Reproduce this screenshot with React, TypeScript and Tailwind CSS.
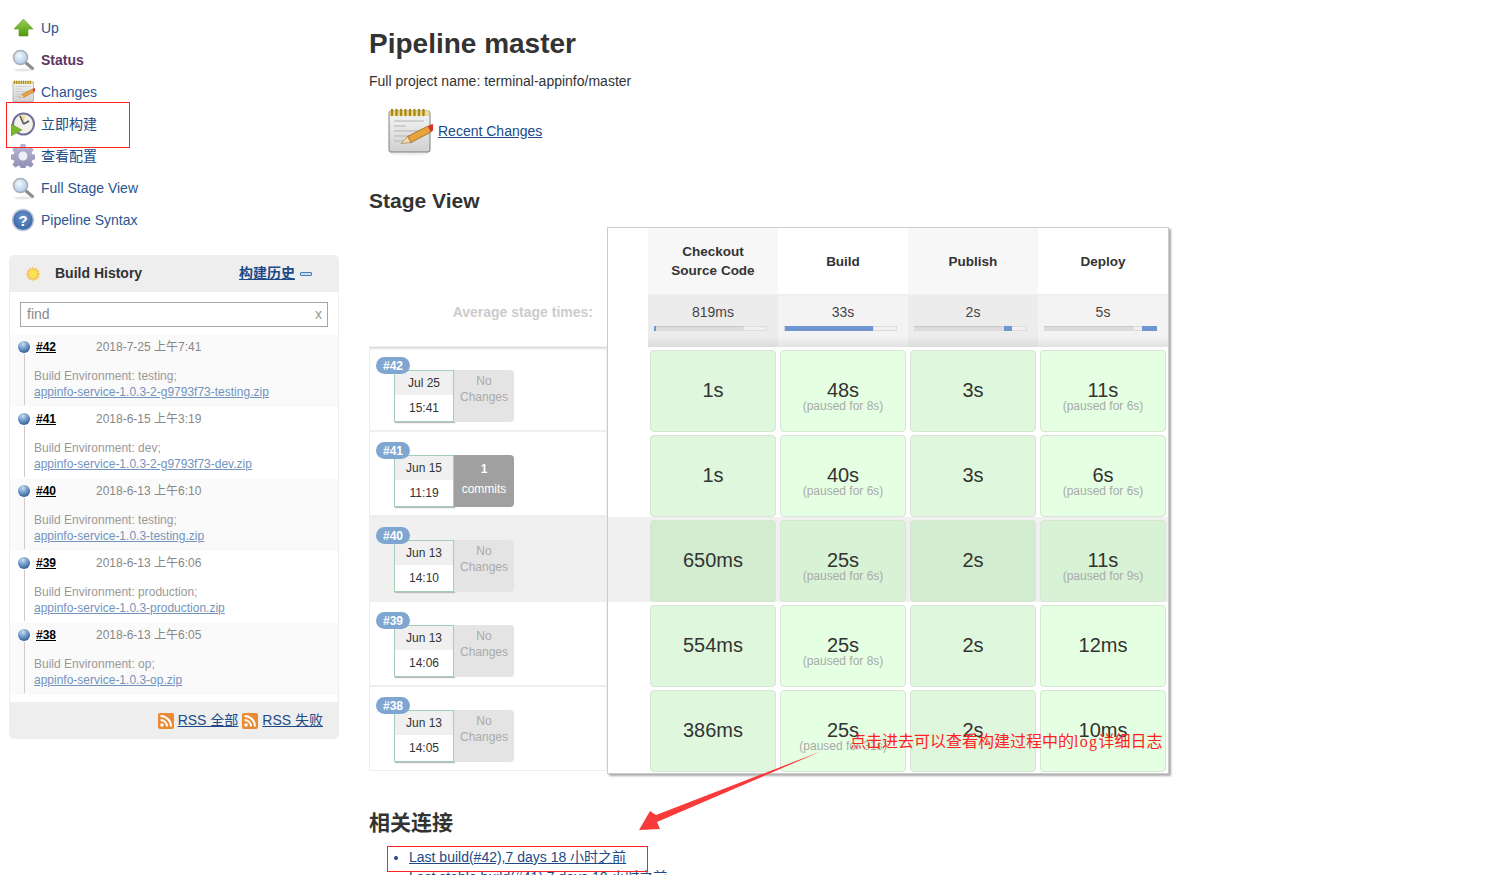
import { useId } from 'react';

// ---- icons ----
function UpIcon() {
  return (
    <svg width="24" height="24" viewBox="0 0 24 24" className="shrink-0">
      <defs>
        <linearGradient id="up" x1="0" y1="0" x2="0" y2="1">
          <stop offset="0" stopColor="#9ccf5a" />
          <stop offset="1" stopColor="#4e9a06" />
        </linearGradient>
      </defs>
      <path d="M12.5 3 L22 13 H17 V20 H8 V13 H3 Z" fill="url(#up)" stroke="#5a9a1c" strokeWidth="0.6" />
    </svg>
  );
}

function SearchIcon() {
  const id = useId();
  return (
    <svg width="24" height="24" viewBox="0 0 24 24" className="shrink-0">
      <defs>
        <radialGradient id={id} cx="0.4" cy="0.35" r="0.7">
          <stop offset="0" stopColor="#f2f8fd" />
          <stop offset="1" stopColor="#a9c8e6" />
        </radialGradient>
      </defs>
      <ellipse cx="12" cy="22" rx="9" ry="1.5" fill="#e6e6e6" />
      <path d="M14.5 14.5 L21.5 20.5" stroke="#8d8d8d" strokeWidth="3" strokeLinecap="round" />
      <circle cx="9.5" cy="9.5" r="7" fill={`url(#${id})`} stroke="#a9afb5" strokeWidth="1.6" />
    </svg>
  );
}

function NotepadIcon({ size = 24 }: { size?: number }) {
  const id = useId();
  return (
    <svg width={size} height={size} viewBox="0 0 48 48" className="shrink-0">
      <defs>
        <linearGradient id={id} x1="0" y1="0" x2="0" y2="1">
          <stop offset="0" stopColor="#f6f6f6" />
          <stop offset="1" stopColor="#d0d0d0" />
        </linearGradient>
      </defs>
      <ellipse cx="24" cy="45" rx="20" ry="2.5" fill="#eeeeee" />
      <rect x="4" y="3" width="41" height="41" rx="2" fill={`url(#${id})`} stroke="#666" strokeWidth="0.8" />
      <rect x="5" y="3" width="39" height="5" fill="#e9dc9c" />
      <path d="M7 2v5M11.5 2v5M16 2v5M20.5 2v5M25 2v5M29.500 2v5M34 2v5M38.500 2v5" stroke="#a98a12" strokeWidth="2.400" strokeLinecap="round" />
      <path d="M9 13H39M9 18H21M9 23H35M9 28H31M9 33H18" stroke="#b3b3b3" strokeWidth="1" />
      <path d="M22.500 28.500 L43 18 L46 24 L26 34.500 Z" fill="#e8a33d" stroke="#8f5b12" strokeWidth="0.7" />
      <path d="M16 35.500 L22.500 28.500 L26 34.500 Z" fill="#f3dcb0" stroke="#8f5b12" strokeWidth="0.5" />
      <path d="M43 18 L46 16.500 A3 3 0 0 1 48 22.500 L46 24 Z" fill="#d9302c" />
    </svg>
  );
}

function BuildNowIcon() {
  return (
    <svg width="24" height="24" viewBox="0 0 24 24" className="shrink-0">
      <circle cx="12.500" cy="12" r="10.500" fill="#f2f1ec" stroke="#77709a" strokeWidth="2" />
      <path d="M12.500 12 L9 4 A8 8 0 0 1 14 4 Z" fill="#ecd98a" />
      <path d="M12.500 12 L9 4 M12.500 12 L18 9" stroke="#555" strokeWidth="1.500" />
      <path d="M0 12 L11 18 L0 24 Z" fill="#79b829" stroke="#5b9417" strokeWidth="0.5" />
    </svg>
  );
}

function GearIcon() {
  return (
    <svg width="24" height="24" viewBox="0 0 24 24" className="shrink-0">
      <defs>
        <linearGradient id="gear" x1="0" y1="0" x2="0" y2="1">
          <stop offset="0" stopColor="#b9b7d4" />
          <stop offset="1" stopColor="#8f8cb3" />
        </linearGradient>
      </defs>
      <path
        d="M10 0.500h4l0.600 3.500 2 0.900 3-2 2.700 2.800-2 2.900 0.800 2 3.400 0.600v3.800l-3.400 0.700-0.800 2 2 2.900-2.700 2.700-3-2-2 0.900-0.600 2.800h-4l-0.600-2.800-2-0.900-3 2-2.700-2.700 2-2.900-0.800-2-3.400-0.700v-3.800l3.400-0.600 0.800-2-2-2.900 2.700-2.800 3 2 2-0.900z"
        fill="url(#gear)"
        stroke="#8c89ad"
        strokeWidth="0.500"
      />
      <circle cx="12" cy="12" r="4.500" fill="#eeeef5" />
    </svg>
  );
}

function HelpIcon() {
  return (
    <svg width="24" height="24" viewBox="0 0 24 24" className="shrink-0">
      <defs>
        <radialGradient id="help" cx="0.5" cy="0.4" r="0.7">
          <stop offset="0" stopColor="#6f97cd" />
          <stop offset="1" stopColor="#2c5a9e" />
        </radialGradient>
      </defs>
      <circle cx="12" cy="12" r="10.500" fill="url(#help)" stroke="#b9c6d8" strokeWidth="1.500" />
      <text x="12" y="17.500" textAnchor="middle" fontSize="15" fontWeight="700" fill="#fff" fontFamily="Liberation Sans">?</text>
    </svg>
  );
}

function SunIcon() {
  return (
    <svg width="16" height="16" viewBox="0 0 16 16" className="shrink-0">
      <path
        d="M8 0.500l1.300 2.200 2.500-1.200 0.200 2.500 2.500 0.200-1 2.300L15.500 8l-2 1.500 1 2.300-2.500 0.200-0.200 2.500-2.500-1L8 15.500l-1.300-2-2.500 1-0.200-2.500-2.500-0.200 1-2.300L0.500 8l2-1.500-1-2.300 2.500-0.200 0.200-2.500 2.500 1.200z"
        fill="#f6c667"
      />
      <circle cx="8" cy="8" r="4" fill="#fbe24f" />
    </svg>
  );
}

function BallIcon() {
  const id = useId();
  return (
    <svg width="12" height="12" viewBox="0 0 12 12" className="shrink-0">
      <defs>
        <radialGradient id={id} cx="0.4" cy="0.25" r="0.8">
          <stop offset="0" stopColor="#c9dcef" />
          <stop offset="0.5" stopColor="#6f9ac8" />
          <stop offset="1" stopColor="#2d5c93" />
        </radialGradient>
      </defs>
      <circle cx="6" cy="6" r="6" fill={`url(#${id})`} />
    </svg>
  );
}

function RssIcon() {
  return (
    <svg width="16" height="16" viewBox="0 0 16 16" className="shrink-0">
      <rect width="16" height="16" rx="2" fill="#ea8a35" />
      <circle cx="4" cy="12" r="1.800" fill="#fff" />
      <path d="M2.500 7 A6.500 6.500 0 0 1 9 13.500" fill="none" stroke="#fff" strokeWidth="2" />
      <path d="M2.500 3 A10.500 10.500 0 0 1 13 13.500" fill="none" stroke="#fff" strokeWidth="2" />
    </svg>
  );
}

// ---- data ----
const TASKS = [
  { label: 'Up', icon: <UpIcon />, cls: 'text-[#2a5590]' },
  { label: 'Status', icon: <SearchIcon />, cls: 'font-bold text-[#5c3566]' },
  { label: 'Changes', icon: <NotepadIcon />, cls: 'text-[#2a5590]' },
  { label: '立即构建', icon: <BuildNowIcon />, cls: 'text-[#204a87]' },
  { label: '查看配置', icon: <GearIcon />, cls: 'text-[#204a87]' },
  { label: 'Full Stage View', icon: <SearchIcon />, cls: 'text-[#2a5590]' },
  { label: 'Pipeline Syntax', icon: <HelpIcon />, cls: 'text-[#2a5590]' },
];

const HISTORY = [
  { no: '#42', date: '2018-7-25 上午7:41', env: 'testing', file: 'appinfo-service-1.0.3-2-g9793f73-testing.zip' },
  { no: '#41', date: '2018-6-15 上午3:19', env: 'dev', file: 'appinfo-service-1.0.3-2-g9793f73-dev.zip' },
  { no: '#40', date: '2018-6-13 上午6:10', env: 'testing', file: 'appinfo-service-1.0.3-testing.zip' },
  { no: '#39', date: '2018-6-13 上午6:06', env: 'production', file: 'appinfo-service-1.0.3-production.zip' },
  { no: '#38', date: '2018-6-13 上午6:05', env: 'op', file: 'appinfo-service-1.0.3-op.zip' },
];

const STAGES = [
  { name: ['Checkout', 'Source Code'], avg: '819ms', start: 0, width: 1.5 },
  { name: ['Build'], avg: '33s', start: 1, width: 78 },
  { name: ['Publish'], avg: '2s', start: 80, width: 7 },
  { name: ['Deploy'], avg: '5s', start: 87, width: 13 },
];

const RUNS = [
  {
    no: '#42', date: 'Jul 25', time: '15:41', commits: 0,
    cells: [['1s'], ['48s', '(paused for 8s)'], ['3s'], ['11s', '(paused for 6s)']],
  },
  {
    no: '#41', date: 'Jun 15', time: '11:19', commits: 1,
    cells: [['1s'], ['40s', '(paused for 6s)'], ['3s'], ['6s', '(paused for 6s)']],
  },
  {
    no: '#40', date: 'Jun 13', time: '14:10', commits: 0, hl: true,
    cells: [['650ms'], ['25s', '(paused for 6s)'], ['2s'], ['11s', '(paused for 9s)']],
  },
  {
    no: '#39', date: 'Jun 13', time: '14:06', commits: 0,
    cells: [['554ms'], ['25s', '(paused for 8s)'], ['2s'], ['12ms']],
  },
  {
    no: '#38', date: 'Jun 13', time: '14:05', commits: 0,
    cells: [['386ms'], ['25s', '(paused for 31s)'], ['2s'], ['10ms']],
  },
];

// ---- sidebar ----
function Sidebar() {
  return (
    <aside className="w-[339px] shrink-0 pl-[9px]">
      <div className="-ml-[9px] flex flex-col pl-[11px] pt-[12px]">
        {TASKS.map((t) => (
          <div key={t.label} className="flex h-[32px] items-center gap-[6px] text-[14px]">
            {t.icon}
            <span className={t.cls}>{t.label}</span>
          </div>
        ))}
      </div>

      <div className="mt-[19px] overflow-hidden rounded-[5px] border-x border-[#eeeeee]">
        <div className="flex h-[37px] items-center bg-[#eeeeee] pl-[15px] pr-[26px] text-[14px]">
          <SunIcon />
          <span className="ml-[14px] font-bold text-[#333]">Build History</span>
          <span className="ml-auto font-bold text-[#204a87] underline">构建历史</span>
          <span className="ml-[5px] h-[4px] w-[12px] rounded-[1px] border border-[#4a7ebb] bg-[#c9dbf0]" />
        </div>
        <div className="px-[10px] pb-[8px] pt-[10px]">
          <div className="flex h-[25px] items-center justify-between border border-[#a6a6a6] pl-[6px] pr-[5px] text-[14px] text-[#888]">
            <span>find</span>
            <span className="text-[#999]">x</span>
          </div>
        </div>
        <div className="flex flex-col">
          {HISTORY.map((h, i) => (
            <div key={h.no} className={`relative h-[72px] pl-[8px] text-[12px] ${i % 2 === 0 ? 'bg-[#fafafa]' : 'bg-white'}`}>
              <div className="flex items-center pt-[3px]">
                <BallIcon />
                <span className="ml-[6px] w-[60px] font-bold text-black underline">{h.no}</span>
                <span className="text-[#888]">{h.date}</span>
              </div>
              <div className="absolute bottom-[2px] left-[14px] top-[19px] w-px bg-[#cccccc]" />
              <div className="mt-[12px] pl-[16px] leading-[16px] text-[#999]">
                <div>Build Environment: {h.env};</div>
                <div className="text-[#7393bd] underline">{h.file}</div>
              </div>
            </div>
          ))}
        </div>
        <div className="mt-[7px] flex h-[37px] items-center justify-end bg-[#eeeeee] pr-[15px] text-[14px] text-[#204a87]">
          <RssIcon />
          <span className="ml-[4px] underline">RSS 全部</span>
          <span className="ml-[4px]"><RssIcon /></span>
          <span className="ml-[4px] underline">RSS 失败</span>
        </div>
      </div>
    </aside>
  );
}

// ---- stage view ----
function RunRow({ run, first }: { run: (typeof RUNS)[number]; first: boolean }) {
  return (
    <div
      className={`relative h-[85px] border border-[#eeeeee] pl-[24px] pt-[23px] ${run.hl ? 'bg-[#f0f0f0]' : 'bg-white'} ${
        first ? 'shadow-[inset_0_3px_2px_-1px_#dddddd]' : ''
      }`}
    >
      <span className="absolute left-[6px] top-[10px] z-10 flex h-[17px] w-[34px] items-center justify-center rounded-full bg-[#7ea6d0] text-[12px] font-bold text-white">
        {run.no}
      </span>
      <div className="flex h-[52px] w-[120px] text-[12px]">
        <div className="flex w-[60px] flex-col border border-[#a3d0b5] bg-white text-center text-[#333] shadow-[1px_1px_1px_#bbb]">
          <div className="flex h-[24px] items-center justify-center bg-[#f0f0f0]">{run.date}</div>
          <div className="flex flex-1 items-center justify-center">{run.time}</div>
        </div>
        {run.commits > 0 ? (
          <div className="w-[60px] rounded-r-[4px] bg-[#a0a0a0] pt-[4px] text-center leading-[20px] text-white">
            <div className="font-bold">{run.commits}</div>
            <div>commits</div>
          </div>
        ) : (
          <div className="w-[60px] rounded-r-[4px] bg-[#e4e4e4] pt-[3px] text-center leading-[16px] text-[#aaa]">
            <div>No</div>
            <div>Changes</div>
          </div>
        )}
      </div>
    </div>
  );
}

function StageTable() {
  return (
    <div className="z-10 w-[562px] shrink-0 border border-[#cccccc] bg-white pb-[1px] shadow-[2px_2px_2px_#aaaaaa]">
      <div className="grid grid-cols-[40px_repeat(4,130px)]">
        <div className="h-[68px]" />
        {STAGES.map((s, i) => (
          <div
            key={s.avg}
            className={`flex h-[68px] flex-col items-center justify-center border-b-[2px] border-[#eeeeee] text-[13.5px] font-bold leading-[19px] text-[#333] ${i % 2 === 0 ? 'bg-[#f7f7f7]' : 'bg-white'}`}
          >
            {s.name.map((n) => (
              <div key={n}>{n}</div>
            ))}
          </div>
        ))}

        <div className="h-[51px]" />
        {STAGES.map((s, i) => (
          <div key={s.avg} className={`h-[51px] pt-[8px] text-center text-[14px] text-[#444] ${i % 2 === 0 ? 'bg-gradient-to-b from-[#ececec] from-80% to-[#dcdcdc]' : 'bg-gradient-to-b from-[#f3f3f3] from-80% to-[#e2e2e2]'}`}>
            <div className="h-[16px] leading-[16px]">{s.avg}</div>
            <div className="relative ml-[6px] mt-[6px] h-[5px] w-[113px] bg-[#dcdcdc] shadow-[inset_0_1px_1px_#c8c8c8]">
              <div className="absolute right-0 top-0 h-full w-[21%] border border-[#dcdcdc] bg-[#f0f0f0]" />
              <div className="absolute top-0 h-full bg-[#6f96d2]" style={{ left: `${s.start}%`, width: `${s.width}%` }} />
            </div>
          </div>
        ))}

        {RUNS.map((run) => (
          <div key={run.no} className="contents">
            <div className={`h-[85px] ${run.hl ? 'bg-[#f0f0f0]' : 'bg-white'}`} />
            {run.cells.map((c, i) => (
              <div key={i} className={`h-[85px] px-[2px] pt-[3px] ${run.hl ? 'bg-[#f0f0f0]' : 'bg-white'}`}>
                <div
                  className={`h-[82px] rounded-[4px] border border-[#d6e6d3] pt-[27px] text-center ${
                    run.hl
                      ? i % 2 === 0 ? 'bg-[#d2eccf]' : 'bg-[#d8f2d5]'
                      : i % 2 === 0 ? 'bg-[#dff7dc]' : 'bg-[#e5ffe2]'
                  }`}
                >
                  <div className="text-[20px] leading-[24px] text-[#333]">{c[0]}</div>
                  {c[1] && <div className="-mt-[2px] text-[12px] leading-[12px] text-[#aaa]">{c[1]}</div>}
                </div>
              </div>
            ))}
          </div>
        ))}
      </div>
    </div>
  );
}

export default function App() {
  return (
    <div className="relative flex h-[875px] w-[1509px] overflow-hidden bg-white font-['Liberation_Sans','Noto_Sans_CJK_SC',sans-serif] text-[#333]">
      <Sidebar />

      <main className="ml-[30px] w-[800px] shrink-0">
        <h1 className="mt-[27px] text-[28px] font-bold leading-[34px]">Pipeline master</h1>
        <p className="mt-[10px] text-[14px] leading-[20px]">Full project name: terminal-appinfo/master</p>

        <div className="ml-[16px] mt-[16px] flex h-[48px] items-center gap-[5px] text-[14px]">
          <span className="mt-[2px]"><NotepadIcon size={48} /></span>
          <span className="text-[#204a87] underline">Recent Changes</span>
        </div>

        <h2 className="mt-[34px] text-[21px] font-bold leading-[24px]">Stage View</h2>

        <div className="mt-[14px] flex">
          <div className="w-[238px] shrink-0">
            <div className="flex h-[119px] items-start justify-end pr-[14px] pt-[75px] text-[14px] font-bold text-[#cccccc]">
              Average stage times:
            </div>
            {RUNS.map((run, i) => (
              <RunRow key={run.no} run={run} first={i === 0} />
            ))}
          </div>
          <StageTable />
        </div>

        <h2 className="mt-[34px] text-[21px] font-bold leading-[30px]">相关连接</h2>
        <ul className="ml-[40px] mt-[9px] list-disc text-[14px] leading-[20px] text-[#204a87]">
          <li className="underline">Last build(#42),7 days 18 小时之前</li>
          <li className="underline">Last stable build(#41),7 days 10 小时之前</li>
        </ul>
      </main>

      {/* 标注 */}
      <div className="absolute left-[6px] top-[102px] h-[46px] w-[124px] border border-[#ff2222]" />
      <div className="absolute left-[387px] top-[846px] h-[26px] w-[261px] border border-[#ff2222]" />
      <span className="absolute left-[850px] top-[732px] z-20 whitespace-nowrap font-['Liberation_Serif','Noto_Sans_CJK_SC',serif] text-[16px] leading-[20px] text-[#ff2222]">
        点击进去可以查看构建过程中的<span className="tracking-[1.3px]">log</span>详细日志
      </span>
      <svg width="200" height="90" viewBox="0 0 200 90" className="absolute left-[630px] top-[748px] z-20">
        <path d="M192 3 L26 67 L20 63 L9 82 L30 81 L27 74 Z" fill="#f83a3a" />
      </svg>
    </div>
  );
}
